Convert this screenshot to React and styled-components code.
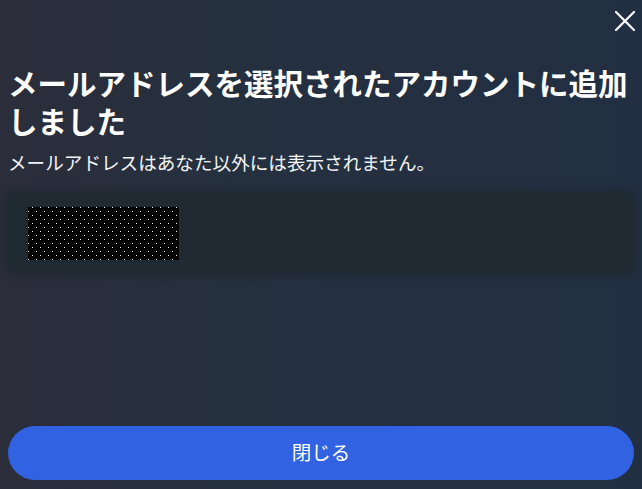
import React from "react";
import styled, { createGlobalStyle } from "styled-components";

const Global = createGlobalStyle`
  html, body { margin: 0; padding: 0; height: 100%; }
  body {
    font-family: "Noto Sans CJK JP", "Noto Sans", sans-serif;
    background: #232e3f;
  }
  #root { height: 100%; }
`;

const Page = styled.div`
  box-sizing: border-box;
  height: 100vh;
  display: flex;
  flex-direction: column;
  padding: 0 8px 9px 8px;
  background: linear-gradient(90deg, #2b2d3a 0%, #25303f 35%, #222f42 100%);
  color: #ffffff;
`;

const TopBar = styled.div`
  display: flex;
  justify-content: flex-end;
  height: 63px;
  padding-top: 10px;
  box-sizing: border-box;
`;

const CloseButton = styled.button`
  width: 22px;
  height: 22px;
  padding: 0;
  margin-right: -2px;
  border: none;
  background: transparent;
  display: flex;
  align-items: center;
  justify-content: center;
  cursor: pointer;
`;

const Title = styled.h1`
  margin: 0;
  font-size: 29.5px;
  line-height: 38px;
  font-weight: 700;
  letter-spacing: 0;
`;

const Subtitle = styled.p`
  margin: 10px 0 0 0;
  font-size: 18.6px;
  line-height: 26px;
  font-weight: 400;
  color: #f2f4f7;
`;

const Card = styled.div`
  margin-top: 18px;
  height: 80px;
  border-radius: 8px;
  background: #1f2a33;
  box-shadow: 0 0 6px 3px #1f2a33;
  display: flex;
  align-items: center;
  padding-left: 20px;
`;

const Redacted = styled.svg`
  display: block;
  width: 151px;
  height: 53px;
`;

const Spacer = styled.div`
  flex: 1;
`;

const PrimaryButton = styled.button`
  height: 54px;
  width: 100%;
  border: none;
  border-radius: 27px;
  background: #3062e2;
  color: #ffffff;
  font-family: "Noto Sans CJK JP", "Noto Sans", sans-serif;
  font-size: 19.5px;
  font-weight: 400;
  line-height: 1;
  padding: 0 0 2px 0;
  cursor: pointer;
`;

export default function App() {
  return (
    <>
      <Global />
      <Page>
        <TopBar>
          <CloseButton aria-label="閉じる">
            <svg width="20" height="20" viewBox="0 0 20 20">
              <path d="M1 1 L19 19 M19 1 L1 19" stroke="#fff" strokeWidth="2.2" strokeLinecap="round" />
            </svg>
          </CloseButton>
        </TopBar>
        <Title>メールアドレスを選択されたアカウントに追加しました</Title>
        <Subtitle>メールアドレスはあなた以外には表示されません。</Subtitle>
        <Card>
          <Redacted viewBox="0 0 151 53" shapeRendering="crispEdges">
            <defs>
              <pattern id="dots" width="8" height="8" patternUnits="userSpaceOnUse">
                <rect width="8" height="8" fill="#000" />
                <rect x="4" y="0" width="1" height="1" fill="#fff" />
                <rect x="0" y="4" width="1" height="1" fill="#fff" />
              </pattern>
            </defs>
            <rect width="151" height="53" fill="url(#dots)" />
          </Redacted>
        </Card>
        <Spacer />
        <PrimaryButton>閉じる</PrimaryButton>
      </Page>
    </>
  );
}
